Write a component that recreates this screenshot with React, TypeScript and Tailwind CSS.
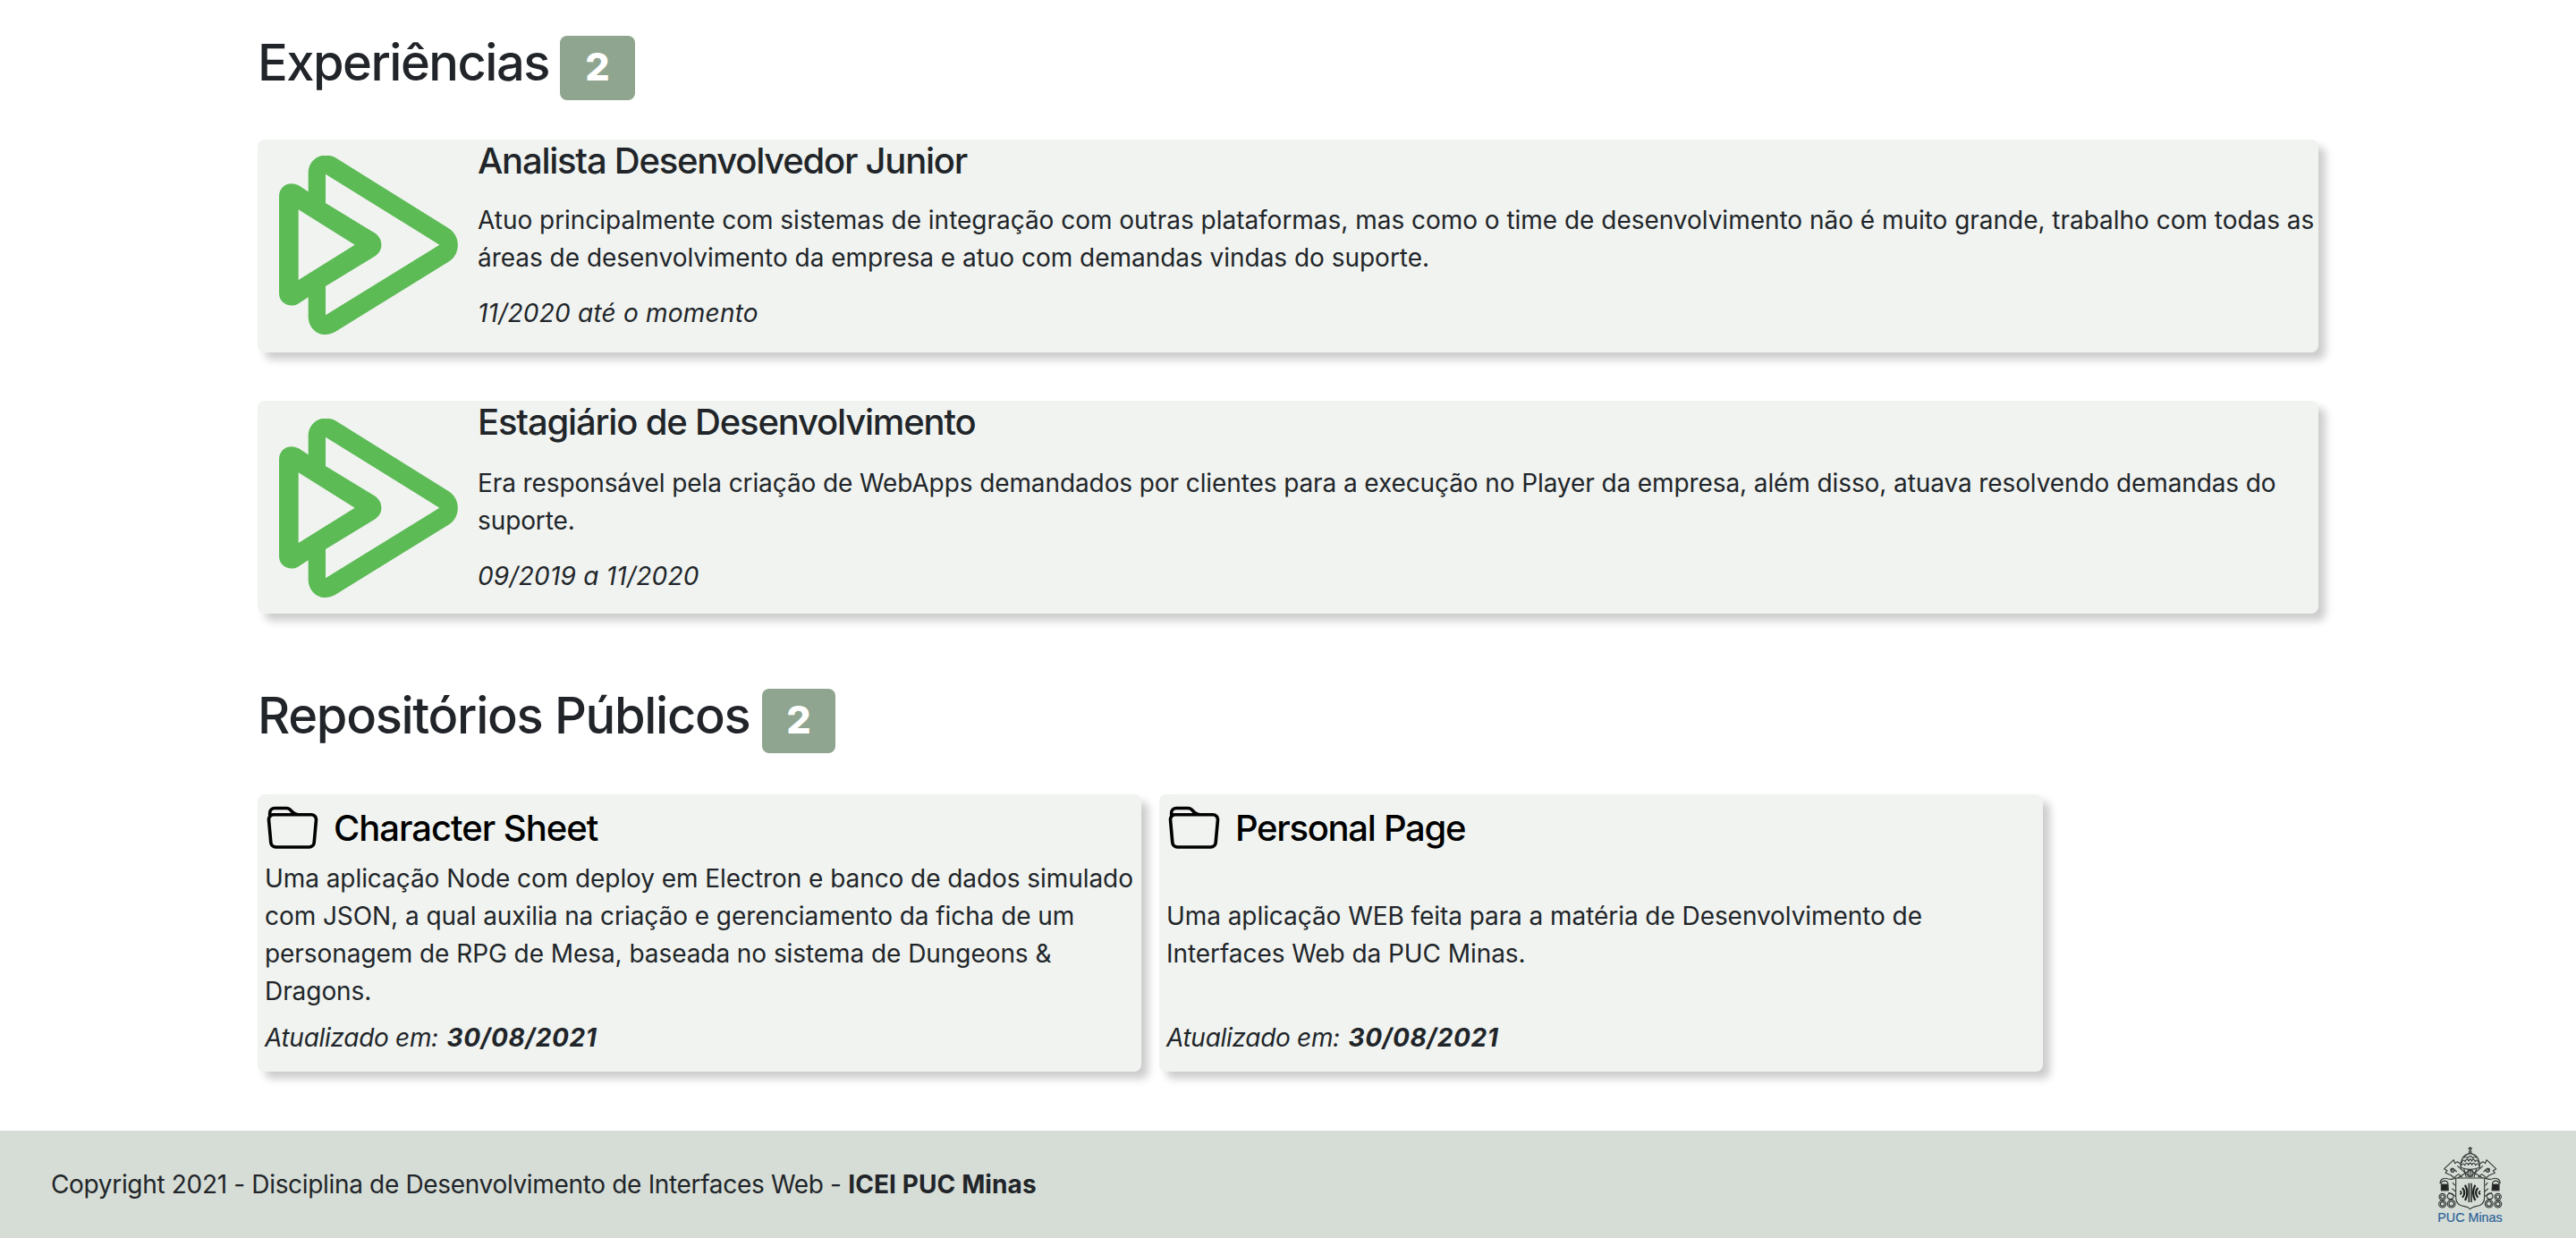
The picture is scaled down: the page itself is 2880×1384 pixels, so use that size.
import type { ReactNode } from "react";

function PlayerLogo() {
  return (
    <svg viewBox="126 102 600 600" className="h-[200px] w-[200px] shrink-0 text-[#5dbb56]" fill="currentColor">
      <path
        fillRule="evenodd"
        d="M224 223V160C224 115 268 86 314 108L694 345C736 370 736 434 694 458L314 693C268 718 224 687 224 641V577L188 600C158 614 126 594 126 564V238C126 206 158 184 192 202ZM282 164V261L446 361C477 381 477 422 446 440L282 540V637L664 401ZM191 283V519L380 401Z"
      />
    </svg>
  );
}

function FolderIcon() {
  return (
    <svg viewBox="0 0 16 16" className="h-[58px] w-[58px] shrink-0" fill="currentColor">
      <path d="M.54 3.87.5 3a2 2 0 0 1 2-2h3.672a2 2 0 0 1 1.414.586l.828.828A2 2 0 0 0 9.828 3h3.982a2 2 0 0 1 1.992 2.181l-.637 7A2 2 0 0 1 13.174 14H2.826a2 2 0 0 1-1.991-1.819l-.637-7a1.99 1.99 0 0 1 .342-1.31zM2.19 4a1 1 0 0 0-.996 1.09l.637 7a1 1 0 0 0 .995.91h10.348a1 1 0 0 0 .995-.91l.637-7A1 1 0 0 0 13.81 4H2.19zm4.69-1.707A1 1 0 0 0 6.172 2H2.5a1 1 0 0 0-1 .981l.006.139C1.72 3.042 1.95 3 2.19 3h5.396l-.707-.707z" />
    </svg>
  );
}

function CrossedKey() {
  return (
    <g>
      <path d="M228 172L142 116L134 122L130 110L98 140L108 146L102 154L122 162L130 170L146 158L158 168" />
      <path d="M142 130L186 168M132 142L140 150M120 138l8 8m0-8l-8 8" />
      <circle cx="126" cy="145" r="6" />
      <circle cx="92" cy="234" r="11" />
      <circle cx="92" cy="258" r="12" />
      <circle cx="119" cy="232" r="10" />
      <circle cx="122" cy="257" r="13" />
      <circle cx="92" cy="234" r="6" />
      <circle cx="92" cy="258" r="7" />
      <circle cx="122" cy="257" r="8" />
      <path d="M84 190C84 174 96 168 112 174C124 178 132 172 138 170M88 186C94 178 104 178 110 186L112 212H88Z" />
      <path d="M89 192H110V212H89Z" fill="#222" />
      <path d="M92 184q8-8 16 0M126 186L134 196M124 206L136 216M112 220L136 232" />
    </g>
  );
}

function PucLogo() {
  return (
    <svg viewBox="72 60 228 264" className="h-[88px] w-[76px] shrink-0">
      <g fill="none" stroke="#333836" strokeWidth="3.4" strokeLinejoin="round">
        <CrossedKey />
        <g transform="translate(370 0) scale(-1 1)">
          <CrossedKey />
        </g>
        <path d="M153 136C152 108 164 92 185 88C206 92 218 108 217 136Q185 148 153 136Z" fill="#d6ddd6" />
        <path d="M156 120Q162 104 168 116Q174 100 180 114Q185 100 190 114Q196 100 202 116Q208 104 214 120M154 132Q160 116 167 128Q173 114 179 127Q185 114 191 127Q197 114 203 128Q210 116 216 132M164 104Q170 94 176 104Q185 90 194 104Q200 94 206 104" />
        <path d="M164 140L172 168M206 140L198 168M178 142V168M192 142V168M185 142V168" />
        <circle cx="185" cy="84" r="4" />
        <path d="M185 66V80M178 72H192" strokeWidth="4" />
        <path d="M137 171H233V236C233 258 220 264 204 266C194 268 190 270 185 275C180 270 176 268 166 266C150 264 137 258 137 236Z" fill="#d6ddd6" />
      </g>
      <g fill="none" stroke="#1d1f1e" strokeWidth="6.5">
        <path d="M181 188V252M189 188V252" strokeWidth="4.5" />
        <path d="M168 194Q182 220 168 246M202 194Q188 220 202 246" />
        <path d="M159 204Q173 220 159 236M211 204Q197 220 211 236" />
        <path d="M151 214Q160 220 151 226M219 214Q210 220 219 226" strokeWidth="5" />
      </g>
      <text x="76" y="317" fontSize="43" textLength="217" lengthAdjust="spacingAndGlyphs" fill="#2c6299" stroke="#2c6299" strokeWidth="0.6" className="font-['Liberation_Sans',sans-serif]">
        PUC Minas
      </text>
    </svg>
  );
}

function SectionTitle({ children, count, gap, badge }: { children: ReactNode; count: number; gap: string; badge: string }) {
  return (
    <div className="flex h-[76px] items-start">
      <h1 className={`whitespace-nowrap text-[56px] leading-[68px] font-medium ${gap}`}>{children}</h1>
      <span className={`mt-1 h-[72px] rounded-lg bg-[#8fa58f] text-center text-[43px] leading-[69px] font-extrabold text-white ${badge}`}>
        {count}
      </span>
    </div>
  );
}

const card = "rounded-lg bg-[#f0f3f0] shadow-[8px_8px_10px_rgba(0,0,0,0.2)]";

interface ExperienceProps {
  title: string;
  titleClass: string;
  period: string;
  logoClass: string;
  textClass: string;
  children: ReactNode;
}

function Experience({ title, titleClass, period, logoClass, textClass, children }: ExperienceProps) {
  return (
    <article className={`flex h-[238px] pl-6 ${card}`}>
      <div className={logoClass}>
        <PlayerLogo />
      </div>
      <div className="ml-[22px] whitespace-nowrap">
        <h2 className={`h-12 text-[40px] leading-[47px] font-medium ${titleClass}`}>{title}</h2>
        <p className={textClass}>{children}</p>
        <p className="mt-5 tracking-[0.22px] italic">{period}</p>
      </div>
    </article>
  );
}

function Repository({ title, titleClass, children }: { title: string; titleClass: string; children: ReactNode }) {
  return (
    <article className={`flex h-[310px] w-[988px] flex-col px-2 whitespace-nowrap ${card}`}>
      <div className="flex h-[73px] gap-[17px] pt-[10px] pl-[2px] text-black">
        <FolderIcon />
        <h2 className={`pt-1 text-[40px] leading-[47px] font-medium ${titleClass}`}>{title}</h2>
      </div>
      <div className="flex h-[168px] items-center">
        <p className="tracking-[-0.065px]">{children}</p>
      </div>
      <p className="mt-[10px] tracking-[-0.3px] italic">
        Atualizado em: <strong className="ml-[2px] font-bold tracking-[0.6px]">30/08/2021</strong>
      </p>
    </article>
  );
}

export default function App() {
  return (
    <div className="flex h-[1384px] w-[2880px] flex-col overflow-hidden bg-white font-['Inter',sans-serif] text-[28px] leading-[42px] text-[#212529]">
      <main className="flex-1 px-[288px] pt-9">
        <SectionTitle count={2} gap="w-[338px] tracking-[-1.5px]" badge="w-[84px]">
          Experiências
        </SectionTitle>
        <div className="mt-11 flex flex-col gap-[54px]">
          <Experience
            title="Analista Desenvolvedor Junior"
            titleClass="tracking-[-1.25px]"
            period="11/2020 até o momento"
            logoClass="pt-[18px]"
            textClass="mt-[21px] tracking-[-0.025px]"
          >
            Atuo principalmente com sistemas de integração com outras plataformas, mas como o time de desenvolvimento não é muito grande, trabalho com todas as
            <br />
            áreas de desenvolvimento da empresa e atuo com demandas vindas do suporte.
          </Experience>
          <Experience
            title="Estagiário de Desenvolvimento"
            titleClass="tracking-[-1.18px]"
            period="09/2019 a 11/2020"
            logoClass="pt-5"
            textClass="mt-[23px] tracking-[-0.1px]"
          >
            Era responsável pela criação de WebApps demandados por clientes para a execução no Player da empresa, além disso, atuava resolvendo demandas do
            <br />
            suporte.
          </Experience>
        </div>
        <div className="mt-20">
          <SectionTitle count={2} gap="w-[564px] tracking-[-1.3px]" badge="w-[82px]">
            Repositórios Públicos
          </SectionTitle>
        </div>
        <div className="mt-[46px] flex gap-5">
          <Repository title="Character Sheet" titleClass="tracking-[-1.02px]">
            Uma aplicação Node com deploy em Electron e banco de dados simulado
            <br />
            com JSON, a qual auxilia na criação e gerenciamento da ficha de um
            <br />
            personagem de RPG de Mesa, baseada no sistema de Dungeons &amp;
            <br />
            Dragons.
          </Repository>
          <Repository title="Personal Page" titleClass="tracking-[-1.3px]">
            Uma aplicação WEB feita para a matéria de Desenvolvimento de
            <br />
            Interfaces Web da PUC Minas.
          </Repository>
        </div>
      </main>
      <footer className="flex h-[120px] items-center justify-between bg-[#d6ddd6] pr-20 pl-[57px]">
        <p className="whitespace-nowrap tracking-[-0.33px]">
          Copyright 2021 - Disciplina de Desenvolvimento de Interfaces Web -{" "}
          <strong className="font-bold tracking-[0.1px]">ICEI PUC Minas</strong>
        </p>
        <PucLogo />
      </footer>
    </div>
  );
}
